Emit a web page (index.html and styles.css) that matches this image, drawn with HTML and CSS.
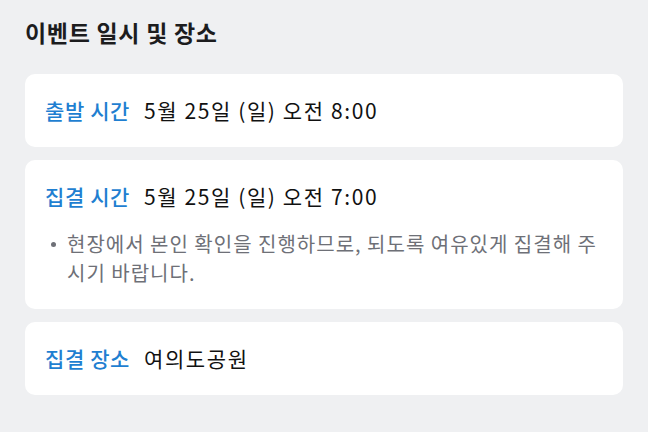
FILE: index.html
```html
<!DOCTYPE html>
<html>
<head>
  <title>이벤트 일시 및 장소</title>
  <link rel="stylesheet" href="styles.css">
</head>
<body>
  <div class="event-info">
    <h2 class="section-title">이벤트 일시 및 장소</h2>

    <div class="info-card">
      <div class="info-row">
        <span class="info-label">출발 시간</span>
        <span class="info-value">5월 25일 (일) 오전 8:00</span>
      </div>
    </div>

    <div class="info-card">
      <div class="info-row">
        <span class="info-label">집결 시간</span>
        <span class="info-value">5월 25일 (일) 오전 7:00</span>
      </div>
      <ul class="info-notes">
        <li>현장에서 본인 확인을 진행하므로, 되도록 여유있게 집결해 주시기 바랍니다.</li>
      </ul>
    </div>

    <div class="info-card">
      <div class="info-row">
        <span class="info-label">집결 장소</span>
        <span class="info-value">여의도공원</span>
      </div>
    </div>
  </div>
</body>
</html>
```

FILE: styles.css
```css
/* Page */
body {
  margin: 0;
  background-color: #eff0f2;
  font-family: "Noto Sans CJK KR", "Noto Sans", sans-serif;
  color: #111;
}

.event-info {
  padding: 18px 25px;
  display: flex;
  flex-direction: column;
  gap: 13px;
}

/* Section title */
.section-title {
  margin: 0 0 15px;
  font-size: 23px;
  font-weight: 700;
  line-height: 28px;
  letter-spacing: 0.7px;
  color: #1c1c1e;
}

/* Card */
.info-card {
  background-color: #fff;
  border-radius: 10px;
  padding: 22px 20px;
}

.info-row {
  display: flex;
  align-items: baseline;
  gap: 14px;
  font-size: 21px;
  line-height: 29px;
}

.info-label {
  color: #1f7fd1;
  font-weight: 500;
  letter-spacing: 0.6px;
}

.info-value {
  color: #111;
  letter-spacing: 1.6px;
}

/* Notes list */
.info-notes {
  list-style: none;
  margin: 18px 0 0;
  padding: 0;
  font-size: 20px;
  line-height: 29px;
  letter-spacing: 1px;
  color: #6e7077;
}

.info-notes li {
  position: relative;
  padding-left: 22px;
}

.info-notes li::before {
  content: "";
  position: absolute;
  left: 6px;
  top: 13px;
  width: 5px;
  height: 5px;
  border-radius: 50%;
  background-color: #6e7077;
}
```
